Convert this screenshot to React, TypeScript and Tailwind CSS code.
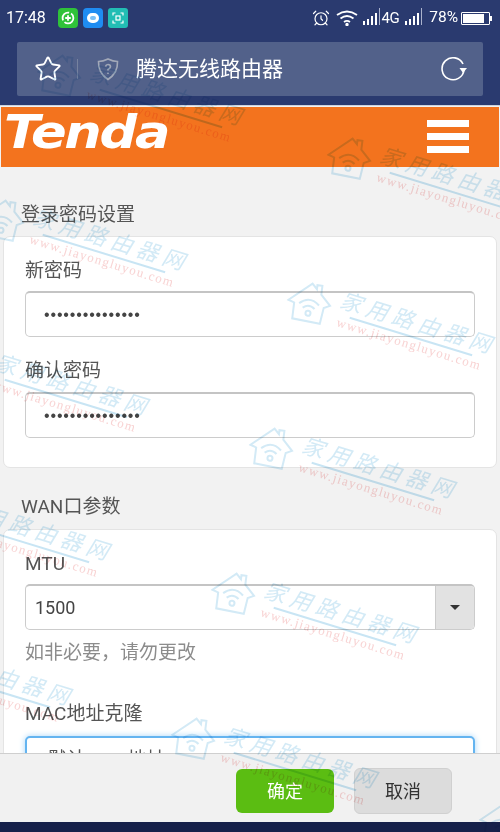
import { AlarmClock, Star } from "lucide-react";

const font = { fontFamily: '"Roboto", "Noto Sans CJK SC", sans-serif' };

const labelClass = "text-[19px] leading-[26px] text-[#555]";
const inputClass =
  "h-[46px] rounded-[5px] border border-[#ccc] border-t-2 border-t-[#c4c4c4] bg-white flex items-center";

const marks = [
  "left-[42px] top-[46px]",
  "left-[332px] top-[129px]",
  "left-[-15px] top-[191px]",
  "left-[292px] top-[274px]",
  "left-[-53px] top-[336px]",
  "left-[254px] top-[419px]",
  "left-[-91px] top-[481px]",
  "left-[216px] top-[564px]",
  "left-[-130px] top-[626px]",
  "left-[176px] top-[709px]",
  "left-[484px] top-[794px]",
];

const Watermark = ({ className }: { className: string }) => (
  <div
    className={`absolute w-[240px] h-[80px] origin-top-left rotate-[17deg] opacity-75 mix-blend-multiply ${className}`}
  >
    <svg width="46" height="46" viewBox="0 0 46 46" fill="none" stroke="#c4e3f3" strokeWidth="2" className="absolute left-[2px] top-0 rotate-[-10deg]">
      <path d="M2 22 L24 3 L29 8 L29 4 L34 4 L34 13 L44 23 L38 26 L36 42 L8 40 L8 24 Z" />
      <path d="M13 24 Q23 15 33 24 M17 28 Q23 23 29 28" />
      <circle cx="23" cy="33" r="2.5" />
    </svg>
    <div className="absolute left-[54px] top-[-6px] flex gap-[5px] text-[22px] leading-[28px] italic text-[#c4e3f3] font-['Noto_Sans_CJK_SC',sans-serif] whitespace-nowrap">
      <span>家</span>
      <span>用</span>
      <span>路</span>
      <span>由</span>
      <span>器</span>
      <span>网</span>
    </div>
    <div className="absolute left-[68px] top-[24px] w-[128px] h-[2px] bg-[#b6dcf0]" />
    <div className="absolute left-[57px] top-[25px] text-[13px] leading-[16px] tracking-[1.3px] text-[#f6c4c4] font-['Liberation_Serif',serif] whitespace-nowrap">
      www.jiayongluyou.com
    </div>
  </div>
);

const Bars = () => (
  <div className="flex items-end gap-[2px] h-[14px]">
    <div className="w-[2px] h-[4px] bg-white" />
    <div className="w-[2px] h-[6px] bg-white" />
    <div className="w-[2px] h-[9px] bg-white" />
    <div className="w-[2px] h-[12px] bg-white" />
    <div className="w-px h-[17px] bg-[#aab2cc]" />
  </div>
);

const StatusBar = () => (
  <div className="h-[36px] flex items-center pl-[6px] pr-[8px] text-white">
    <span className="text-[16px] leading-none w-[46px]">17:48</span>
    <div className="ml-[6px] w-[20px] h-[20px] rounded-[4px] bg-[#2fc23a] flex items-center justify-center">
      <svg width="14" height="14" viewBox="0 0 14 14" fill="none" stroke="white" strokeWidth="1.8">
        <circle cx="7" cy="7" r="5.4" strokeDasharray="12 2" />
        <path d="M7 4.2v5.6M4.2 7h5.6" />
      </svg>
    </div>
    <div className="ml-[5px] w-[20px] h-[20px] rounded-[4px] bg-[#1f8cf2] flex items-center justify-center">
      <div className="w-[12px] h-[10px] rounded-full border-[3px] border-white bg-[#7cc0f5]" />
    </div>
    <div className="ml-[5px] w-[20px] h-[20px] rounded-[3px] bg-[#22bdb4] flex items-center justify-center">
      <svg width="12" height="12" viewBox="0 0 12 12" fill="none" stroke="white" strokeWidth="1.2">
        <path d="M1 3.5V1h2.5M8.5 1H11v2.5M11 8.5V11H8.5M3.5 11H1V8.5" />
        <rect x="4" y="4" width="4" height="4" />
      </svg>
    </div>
    <AlarmClock size={18} strokeWidth={1.6} className="ml-auto" />
    <svg width="22" height="16" viewBox="0 0 22 16" fill="none" stroke="white" strokeWidth="1.8" className="ml-[6px]">
      <path d="M1 5 Q11 -2 21 5M4.5 8.5 Q11 3.5 17.5 8.5M8 12 Q11 9.8 14 12" />
      <circle cx="11" cy="14.5" r="0.8" fill="white" />
    </svg>
    <div className="ml-[5px]">
      <Bars />
    </div>
    <span className="ml-[2px] text-[15px] leading-none tracking-[-0.5px]">4G</span>
    <div className="ml-[6px]">
      <Bars />
    </div>
    <span className="ml-[7px] text-[15.5px] leading-none">78%</span>
    <div className="ml-[3px] w-[29px] h-[13px] border border-white rounded-[1px] p-px">
      <div className="w-[21px] h-full bg-white" />
    </div>
    <div className="w-[2px] h-[5px] bg-white" />
  </div>
);

const UrlBar = () => (
  <div className="h-[69px] pt-[6px] px-[17px]">
    <div className="h-[54px] rounded-[2px] bg-[#52618a] flex items-center text-white">
      <Star size={28} strokeWidth={1.6} className="ml-[17px]" />
      <div className="ml-[15px] w-px h-[20px] bg-[#76829f]" />
      <svg width="22" height="24" viewBox="0 0 22 24" fill="none" stroke="#a2a8b8" strokeWidth="1.6" className="ml-[19px]">
        <path d="M11 2 Q16 4.5 20.5 4.5 Q21 16 11 22.5 Q1 16 1.5 4.5 Q6 4.5 11 2 Z" />
        <path d="M8.5 9.5 Q9 7.5 11 7.5 Q13.5 7.5 13.5 9.8 Q13.5 11 11 12.5 V13.5 M11 15.5 V17" />
      </svg>
      <span className="ml-[17px] text-[21px] leading-none">腾达无线路由器</span>
      <svg width="28" height="26" viewBox="0 0 28 26" fill="none" stroke="white" strokeWidth="1.6" className="ml-auto mr-[15px]">
        <path d="M23 8 A11 11 0 1 0 24 14" />
        <path d="M19.5 12 L27 12 L23 17 Z" fill="white" stroke="none" />
      </svg>
    </div>
  </div>
);

const Header = () => (
  <div className="h-[62px] border-t border-t-[#ccd2dc] bg-[#f2f2f2] pr-px">
    <div className="h-[60px] ml-px mt-px bg-[#f3731e] flex items-center justify-between">
      <span className="ml-[3px] -mt-[12px] origin-left scale-x-[1.12] text-[47px] leading-none font-bold italic text-white tracking-[-2px] font-['DejaVu_Sans',sans-serif]">
        Tenda
      </span>
      <div className="mr-[30px] mt-[-2px] flex flex-col gap-[6px]">
        <div className="w-[42px] h-[7px] bg-white" />
        <div className="w-[42px] h-[7px] bg-white" />
        <div className="w-[42px] h-[7px] bg-white" />
      </div>
    </div>
  </div>
);

const Dots = () => (
  <span className="ml-[18px] text-[16px] leading-none tracking-[0.85px] text-[#444] font-['Liberation_Sans',sans-serif]">
    •••••••••••••••
  </span>
);

export default function App() {
  return (
    <div className="relative w-[500px] h-[832px] overflow-hidden flex flex-col bg-[#2a3a6f]" style={font}>
      <StatusBar />
      <UrlBar />
      <Header />

      <div className="h-[655px] overflow-hidden bg-[#f2f2f2] px-[3px] relative">
        <div className="h-[69px] pl-[18px] pt-[35px] text-[19px] leading-[26px] text-[#555]">登录密码设置</div>
        <div className="h-[232px] rounded-[7px] border border-[#e4e4e4] bg-white px-[21px] pt-[21px]">
          <div className={labelClass}>新密码</div>
          <div className={`mt-[7px] ${inputClass}`}>
            <Dots />
          </div>
          <div className={`mt-[21px] ${labelClass}`}>确认密码</div>
          <div className={`mt-[8px] ${inputClass}`}>
            <Dots />
          </div>
        </div>
        <div className="h-[61px] pl-[18px] pt-[26px] text-[19px] leading-[26px] text-[#555]">WAN口参数</div>
        <div className="h-[400px] rounded-[7px] border border-[#e4e4e4] bg-white px-[21px] pt-[21px]">
          <div className={labelClass}>MTU</div>
          <div className={`mt-[7px] overflow-hidden ${inputClass}`}>
            <span className="ml-[9px] flex-1 text-[18px] leading-none text-[#444]">1500</span>
            <div className="w-[39px] h-full bg-[#e2e2e2] border-l border-l-[#ccc] flex items-center justify-center">
              <div className="w-0 h-0 border-x-[5px] border-x-transparent border-t-[5px] border-t-[#333]" />
            </div>
          </div>
          <div className="mt-[10px] text-[19px] leading-[26px] text-[#8c8c8c]">如非必要，请勿更改</div>
          <div className={`mt-[35px] ${labelClass}`}>MAC地址克隆</div>
          <div className="mt-[9px] h-[46px] rounded-[5px] border-2 border-[#64b4f0] bg-white shadow-[0_0_6px_#a8d6f8] flex items-center pl-[21px] text-[19px] leading-none text-[#555]">
            默认MAC地址
          </div>
        </div>
      </div>

      <div className="absolute left-0 top-[753px] w-full h-[69px] border-t border-t-[#cfcfcf] bg-[#f1f1f1] pt-[6px] flex items-center justify-end pr-[48px] gap-[20px]">
        <button className="w-[98px] h-[44px] rounded-[6px] bg-[#5bbd12] text-[18px] text-white">确定</button>
        <button className="w-[98px] h-[46px] rounded-[6px] border border-[#d0d0d0] bg-[#dcdcdc] text-[18px] text-[#333]">取消</button>
      </div>

      <div className="absolute left-0 top-[822px] w-full h-[10px] bg-[#16204a]" />

      {marks.map((m) => (
        <Watermark key={m} className={m} />
      ))}
    </div>
  );
}
